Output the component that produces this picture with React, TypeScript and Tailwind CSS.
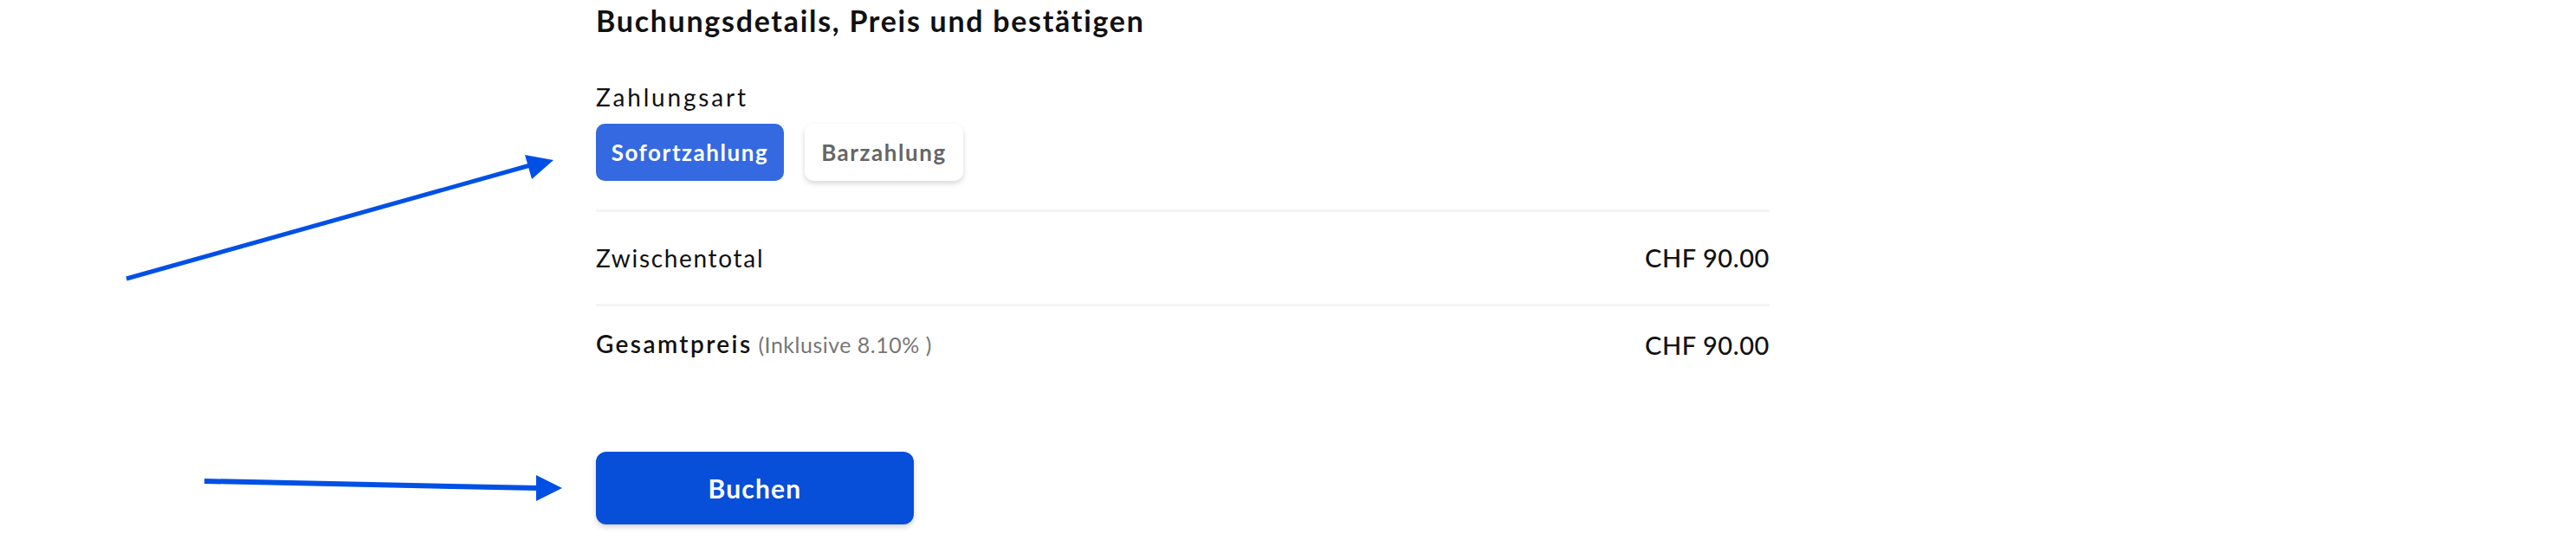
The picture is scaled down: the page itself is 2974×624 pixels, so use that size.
import React from "react";

export default function App() {
  return (
    <div className="relative w-[2974px] h-[624px] bg-white overflow-hidden font-['Lato',sans-serif] text-[#111111]">
      <svg
        className="absolute left-0 top-0 pointer-events-none"
        width="2974"
        height="624"
        viewBox="0 0 2974 624"
      >
        <line x1="146" y1="322" x2="612" y2="191" stroke="#0050E6" strokeWidth="5" />
        <polygon points="606,179 639,185 614,207" fill="#0050E6" />
        <line x1="236" y1="556" x2="622" y2="564" stroke="#0050E6" strokeWidth="6" />
        <polygon points="619,549 649,564 619,579" fill="#0050E6" />
      </svg>

      <div className="ml-[688px] w-[1355px] pt-[4px]">
        <h2 className="text-[34px] leading-[40px] font-bold tracking-[0.05em]">
          Buchungsdetails, Preis und bestätigen
        </h2>

        <div className="mt-[51px] text-[28px] leading-[34px] tracking-[0.1em]">Zahlungsart</div>

        <div className="mt-[14px] flex gap-[24px]">
          <button className="w-[217px] h-[66px] rounded-[10px] bg-[#3469E1] text-white text-[26px] font-bold tracking-[0.06em] flex items-center justify-center">
            Sofortzahlung
          </button>
          <button className="w-[183px] h-[66px] rounded-[10px] bg-white text-[#666666] text-[26px] font-bold tracking-[0.06em] flex items-center justify-center shadow-[0_3px_6px_rgba(0,0,0,0.16)]">
            Barzahlung
          </button>
        </div>

        <div className="mt-[33px] border-t-[3px] border-[#f4f4f4]" />
        <div className="h-[106px] flex items-center justify-between">
          <span className="text-[28px] leading-[34px] tracking-[0.06em]">Zwischentotal</span>
          <span className="text-[29px] leading-[34px] tracking-[0.02em] font-medium">CHF 90.00</span>
        </div>
        <div className="border-t-[3px] border-[#f4f4f4]" />
        <div className="h-[90px] flex items-center justify-between">
          <span className="leading-[34px]">
            <span className="text-[28px] font-semibold tracking-[0.085em]">Gesamtpreis</span>
            <span className="text-[25px] text-[#777777] tracking-[0.02em]"> (Inklusive 8.10% )</span>
          </span>
          <span className="text-[29px] leading-[34px] tracking-[0.02em] font-medium">CHF 90.00</span>
        </div>

        <button className="mt-[78px] w-[367px] h-[84px] rounded-[12px] bg-[#074ED8] text-white text-[30px] font-bold tracking-[0.04em] flex items-center justify-center shadow-[0_3px_6px_rgba(0,0,0,0.18)]">
          Buchen
        </button>
      </div>
    </div>
  );
}
